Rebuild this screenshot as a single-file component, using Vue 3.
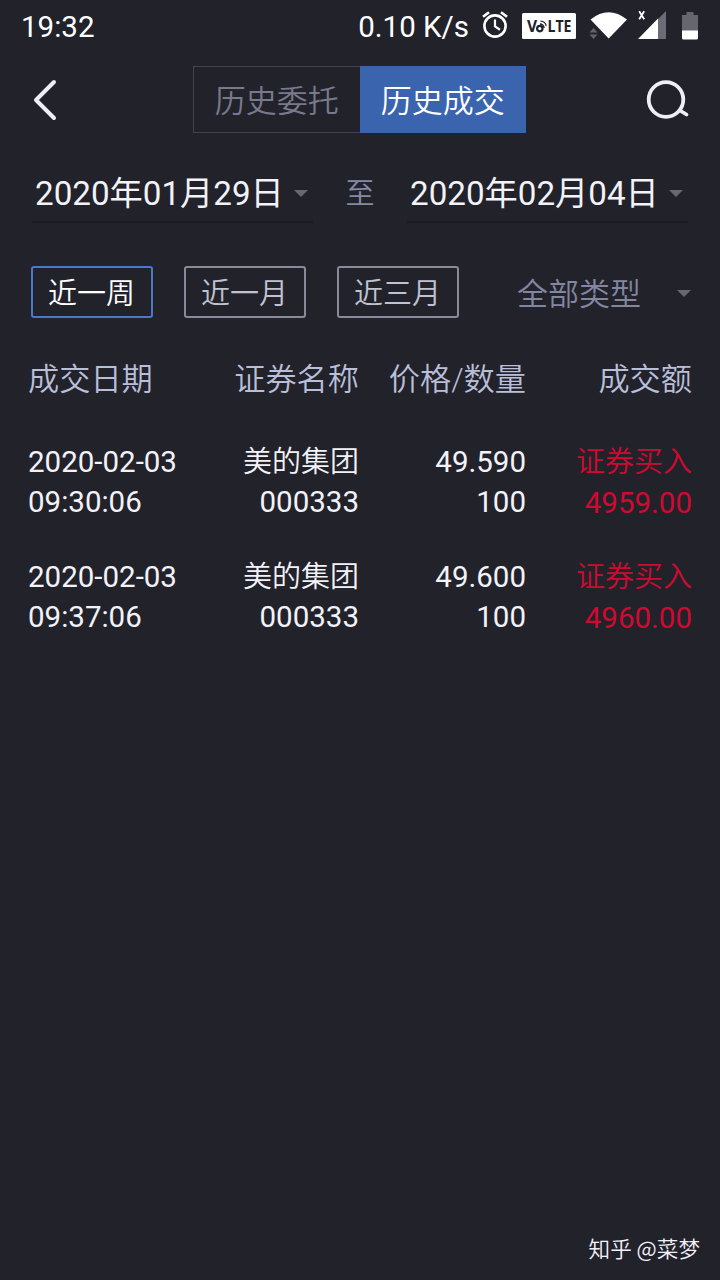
<template>
  <div class="page">
    <header class="status">
      <span class="clock">19:32</span>
      <span class="speed">0.10 K/s</span>
      <svg class="alarm" width="28" height="30" viewBox="0 0 28 30" fill="none" stroke="#fff">
        <circle cx="14" cy="16" r="10.6" stroke-width="2.6" />
        <path d="M14 9.5v7l5 3.2" stroke-width="2.2" />
        <path d="M2 6.8l6-4.6M26 6.8l-6-4.6" stroke-width="2.7" />
      </svg>
      <svg class="volte" width="54" height="26" viewBox="0 0 54 26">
        <rect width="54" height="26" rx="1.5" fill="#fff" />
        <g class="volteText">
          <text x="5" y="18.6">V</text>
          <text x="25.5" y="18.6" textLength="24" lengthAdjust="spacingAndGlyphs">LTE</text>
        </g>
        <g fill="none" stroke="#22222b">
          <circle cx="17.8" cy="15.6" r="2.7" stroke-width="2.2" />
          <path d="M18 11q3.4 0 4.2 4M18.5 8.2q4.7 .2 5.7 4.6" stroke-width="1.3" />
        </g>
      </svg>
      <svg class="wifi" width="40" height="30" viewBox="0 0 40 30">
        <path d="M1.5 8.5Q19.5-6 38 8.5L19.7 27.5Z" fill="#fff" />
        <path d="M4.5 17l4 4.5h-8ZM4.5 28l4-4.5h-8Z" fill="#62626a" />
      </svg>
      <svg class="signal" width="30" height="30" viewBox="0 0 30 30">
        <path d="M28 1V29H20V9Z" fill="#6c6c74" />
        <path d="M0 29L20 8.5V29Z" fill="#fff" />
        <path d="M1.2 1.2l5 8M6.2 1.2l-5 8" fill="none" stroke="#fff" stroke-width="1.8" />
      </svg>
      <svg class="battery" width="16" height="28" viewBox="0 0 16 28">
        <path d="M4.5 0h7v3H16v16H0V3h4.5Z" fill="#66666f" />
        <path d="M0 18.5h16V26q0 1.5-1.5 1.5h-13Q0 27.5 0 26Z" fill="#fff" />
      </svg>
    </header>

    <nav class="nav">
      <svg class="back" width="26" height="44" viewBox="0 0 26 44" fill="none" stroke="#eeeef4" stroke-width="4" stroke-linecap="round" stroke-linejoin="round">
        <path d="M22 4L4 22l18 18" />
      </svg>
      <div class="tabs">
        <button
          v-for="tab in tabs"
          :key="tab"
          class="tab"
          :class="{ active: tab === activeTab }"
          @click="activeTab = tab"
        >{{ tab }}</button>
      </div>
      <svg class="search" width="44" height="42" viewBox="0 0 44 42" fill="none" stroke="#eeeef4" stroke-width="3.8" stroke-linecap="round">
        <circle cx="20" cy="20.5" r="17.3" />
        <path d="M34 31.5l6.5 4" />
      </svg>
    </nav>

    <section class="dates">
      <div class="date">{{ startDate }}<i class="arrow"></i></div>
      <span class="to">至</span>
      <div class="date">{{ endDate }}<i class="arrow"></i></div>
    </section>

    <section class="filters">
      <button
        v-for="range in ranges"
        :key="range"
        class="chip"
        :class="{ active: range === activeRange }"
        @click="activeRange = range"
      >{{ range }}</button>
      <div class="type"><span>全部类型</span><i class="arrow"></i></div>
    </section>

    <div class="row head">
      <span>成交日期</span>
      <span>证券名称</span>
      <span>价格/数量</span>
      <span>成交额</span>
    </div>

    <div v-for="deal in deals" :key="deal.time" class="row deal">
      <div class="num">{{ deal.date }}<br>{{ deal.time }}</div>
      <div>{{ deal.name }}<br><span class="num">{{ deal.code }}</span></div>
      <div class="num">{{ deal.price }}<br>{{ deal.count }}</div>
      <div class="buy">{{ deal.type }}<br><span class="num">{{ deal.amount }}</span></div>
    </div>

    <footer class="sign">知乎 @菜梦</footer>
  </div>
</template>

<script setup>
import { ref } from 'vue';

const tabs = ['历史委托', '历史成交'];
const activeTab = ref('历史成交');

const startDate = ref('2020年01月29日');
const endDate = ref('2020年02月04日');

const ranges = ['近一周', '近一月', '近三月'];
const activeRange = ref('近一周');

const deals = [
  { date: '2020-02-03', time: '09:30:06', name: '美的集团', code: '000333', price: '49.590', count: 100, type: '证券买入', amount: '4959.00' },
  { date: '2020-02-03', time: '09:37:06', name: '美的集团', code: '000333', price: '49.600', count: 100, type: '证券买入', amount: '4960.00' }
];
</script>

<style>
body {
  background: #22222b;
}
</style>

<style scoped>
.page {
  display: flex;
  flex-direction: column;
  box-sizing: border-box;
  width: 720px;
  height: 1280px;
  background: #22222b;
  color: #f2f2f8;
  font-family: Roboto, "Noto Sans CJK SC", sans-serif;
  font-weight: 400;
  white-space: nowrap;
}
button {
  box-sizing: border-box;
  padding: 0;
  font-family: inherit;
  font-weight: inherit;
  background: none;
  cursor: pointer;
}

/* status bar */
.status {
  display: flex;
  align-items: center;
  height: 52px;
  padding: 0 22px 0 21px;
  color: #fff;
  font-size: 29.5px;
}
.clock,
.speed {
  padding-top: 1px;
}
.speed {
  margin-left: auto;
}
.alarm {
  margin: -2px 0 0 12px;
}
.volte {
  margin-left: 13px;
}
.volteText {
  fill: #22222b;
  font-family: "Open Sans", sans-serif;
  font-size: 15.5px;
  font-weight: 700;
}
.wifi {
  margin: -1px 0 0 13px;
}
.signal {
  margin: -2px 0 0 9px;
}
.battery {
  margin: -1px 0 0 14px;
}

/* top navigation */
.nav {
  display: flex;
  align-items: center;
  justify-content: space-between;
  height: 96px;
  padding: 0 30px 0 32px;
}
.tabs {
  display: flex;
  margin: -1px 0 0 15px;
}
.tab {
  width: 166.5px;
  height: 67px;
  padding-bottom: 2px;
  border: 1px solid #41434e;
  border-right: none;
  color: #777a8b;
  font-size: 31px;
  font-weight: 350;
}
.tab.active {
  border: none;
  background: #3a64ae;
  color: #fff;
}

/* date range */
.dates {
  display: flex;
  align-items: center;
  height: 75px;
  padding: 0 32px;
}
.date {
  display: flex;
  align-items: center;
  justify-content: space-between;
  box-sizing: border-box;
  width: 281px;
  height: 75px;
  padding: 11px 5px 0 3px;
  border-bottom: 2px solid #1b1b23;
  font-size: 33.2px;
}
.to {
  width: 94px;
  padding-top: 11px;
  color: #868ba5;
  font-size: 29px;
  font-weight: 350;
  text-align: center;
}
.arrow {
  width: 0;
  height: 0;
  margin-top: 4px;
  border: 7.5px solid transparent;
  border-top-color: #686872;
  border-bottom: none;
}
.date .arrow {
  margin-top: 6px;
}

/* filters */
.filters {
  display: flex;
  align-items: center;
  height: 52px;
  padding: 43px 29px 0 31px;
}
.chip {
  width: 122px;
  height: 52px;
  margin-right: 31px;
  padding: 0 1px 2px 0;
  border: 2px solid #898a98;
  border-radius: 3px;
  color: #c0c2d2;
  font-size: 29px;
  font-weight: 350;
}
.chip.active {
  border-color: #4c78c8;
  color: #fff;
}
.type {
  display: flex;
  flex: 1;
  align-items: center;
  justify-content: space-between;
  margin: -2px 0 0 27px;
  color: #8286a0;
  font-size: 31px;
  font-weight: 350;
}

/* deals */
.row {
  display: grid;
  grid-template-columns: 150px 181px 167px 166px;
  padding: 0 28px;
  text-align: right;
}
.row > :first-child {
  text-align: left;
}
.head {
  height: 40px;
  margin: 42px 0 42px;
  color: #b9bfd8;
  font-size: 31.2px;
  font-weight: 350;
  line-height: 40px;
}
.deal {
  height: 80px;
  margin-bottom: 35px;
  font-size: 29px;
  font-weight: 350;
  line-height: 40px;
}
.num {
  font-size: 29.5px;
  font-weight: 400;
}
.buy {
  color: #cf0a30;
  line-height: 41px;
}

.sign {
  margin: auto 20px 17px 0;
  font-family: "Noto Sans CJK SC", sans-serif;
  font-size: 21.6px;
  font-weight: 350;
  line-height: 30px;
  text-align: right;
}
</style>
